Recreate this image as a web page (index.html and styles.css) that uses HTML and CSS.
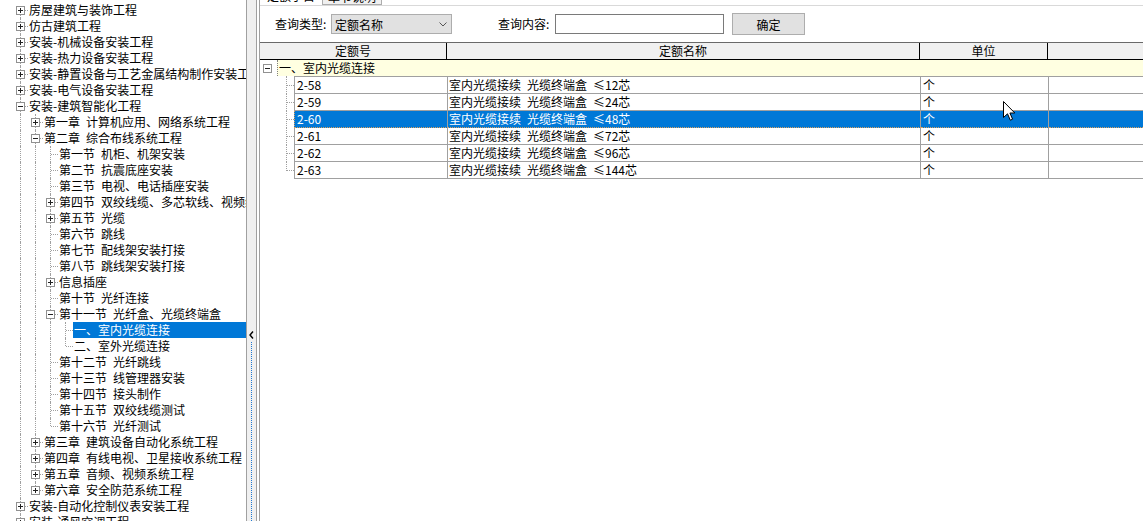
FILE: index.html
```html
<!DOCTYPE html>
<html lang="zh-CN">
<head>
    <meta charset="UTF-8">
    <title>定额查询</title>
    <link rel="stylesheet" href="styles.css">
</head>
<body>
<div class="app">
    <div class="tree">
        <div class="node"><span class="tg first"><i class="box plus"></i></span><span class="lb">房屋建筑与装饰工程</span></div>
        <div class="node"><span class="tg"><i class="box plus"></i></span><span class="lb">仿古建筑工程</span></div>
        <div class="node"><span class="tg"><i class="box plus"></i></span><span class="lb">安装-机械设备安装工程</span></div>
        <div class="node"><span class="tg"><i class="box plus"></i></span><span class="lb">安装-热力设备安装工程</span></div>
        <div class="node"><span class="tg"><i class="box plus"></i></span><span class="lb">安装-静置设备与工艺金属结构制作安装工程</span></div>
        <div class="node"><span class="tg"><i class="box plus"></i></span><span class="lb">安装-电气设备安装工程</span></div>
        <div class="node"><span class="tg"><i class="box minus"></i></span><span class="lb">安装-建筑智能化工程</span></div>
        <div class="node"><span class="g ln"></span><span class="tg"><i class="box plus"></i></span><span class="lb">第一章&ensp;计算机应用、网络系统工程</span></div>
        <div class="node"><span class="g ln"></span><span class="tg"><i class="box minus"></i></span><span class="lb">第二章&ensp;综合布线系统工程</span></div>
        <div class="node"><span class="g ln"></span><span class="g ln"></span><span class="tg"></span><span class="lb">第一节&ensp;机柜、机架安装</span></div>
        <div class="node"><span class="g ln"></span><span class="g ln"></span><span class="tg"></span><span class="lb">第二节&ensp;抗震底座安装</span></div>
        <div class="node"><span class="g ln"></span><span class="g ln"></span><span class="tg"></span><span class="lb">第三节&ensp;电视、电话插座安装</span></div>
        <div class="node"><span class="g ln"></span><span class="g ln"></span><span class="tg"><i class="box plus"></i></span><span class="lb">第四节&ensp;双绞线缆、多芯软线、视频线缆</span></div>
        <div class="node"><span class="g ln"></span><span class="g ln"></span><span class="tg"><i class="box plus"></i></span><span class="lb">第五节&ensp;光缆</span></div>
        <div class="node"><span class="g ln"></span><span class="g ln"></span><span class="tg"></span><span class="lb">第六节&ensp;跳线</span></div>
        <div class="node"><span class="g ln"></span><span class="g ln"></span><span class="tg"></span><span class="lb">第七节&ensp;配线架安装打接</span></div>
        <div class="node"><span class="g ln"></span><span class="g ln"></span><span class="tg"></span><span class="lb">第八节&ensp;跳线架安装打接</span></div>
        <div class="node"><span class="g ln"></span><span class="g ln"></span><span class="tg"><i class="box plus"></i></span><span class="lb">信息插座</span></div>
        <div class="node"><span class="g ln"></span><span class="g ln"></span><span class="tg"></span><span class="lb">第十节&ensp;光纤连接</span></div>
        <div class="node"><span class="g ln"></span><span class="g ln"></span><span class="tg"><i class="box minus"></i></span><span class="lb">第十一节&ensp;光纤盒、光缆终端盒</span></div>
        <div class="node"><span class="g ln"></span><span class="g ln"></span><span class="g ln"></span><span class="tg"></span><span class="lb sel">一、室内光缆连接</span></div>
        <div class="node"><span class="g ln"></span><span class="g ln"></span><span class="g ln"></span><span class="tg last"></span><span class="lb">二、室外光缆连接</span></div>
        <div class="node"><span class="g ln"></span><span class="g ln"></span><span class="tg"></span><span class="lb">第十二节&ensp;光纤跳线</span></div>
        <div class="node"><span class="g ln"></span><span class="g ln"></span><span class="tg"></span><span class="lb">第十三节&ensp;线管理器安装</span></div>
        <div class="node"><span class="g ln"></span><span class="g ln"></span><span class="tg"></span><span class="lb">第十四节&ensp;接头制作</span></div>
        <div class="node"><span class="g ln"></span><span class="g ln"></span><span class="tg"></span><span class="lb">第十五节&ensp;双绞线缆测试</span></div>
        <div class="node"><span class="g ln"></span><span class="g ln"></span><span class="tg last"></span><span class="lb">第十六节&ensp;光纤测试</span></div>
        <div class="node"><span class="g ln"></span><span class="tg"><i class="box plus"></i></span><span class="lb">第三章&ensp;建筑设备自动化系统工程</span></div>
        <div class="node"><span class="g ln"></span><span class="tg"><i class="box plus"></i></span><span class="lb">第四章&ensp;有线电视、卫星接收系统工程</span></div>
        <div class="node"><span class="g ln"></span><span class="tg"><i class="box plus"></i></span><span class="lb">第五章&ensp;音频、视频系统工程</span></div>
        <div class="node"><span class="g ln"></span><span class="tg last"><i class="box plus"></i></span><span class="lb">第六章&ensp;安全防范系统工程</span></div>
        <div class="node"><span class="tg"><i class="box plus"></i></span><span class="lb">安装-自动化控制仪表安装工程</span></div>
        <div class="node"><span class="tg"><i class="box plus"></i></span><span class="lb">安装-通风空调工程</span></div>
    </div>

    <div class="splitter">
        <svg class="arrow" width="5" height="8" viewBox="0 0 5 8"><path d="M4 0.5 L1 4 L4 7.5" fill="none" stroke="#000" stroke-width="1.4"/></svg>
        <div class="grip"></div>
    </div>

    <div class="main">
        <div class="tabs">
            <span class="tab">定额子目</span>
            <span class="tab on">章节说明</span>
        </div>

        <div class="query">
            <label class="ql">查询类型:</label>
            <div class="select">
                <span>定额名称</span>
                <svg width="8" height="5" viewBox="0 0 8 5"><path d="M0.5 0.5 L4 4 L7.5 0.5" fill="none" stroke="#555" stroke-width="1"/></svg>
            </div>
            <label class="ql ql2">查询内容:</label>
            <input class="qinput" type="text">
            <button class="btn" type="button">确定</button>
        </div>

        <div class="grid">
            <div class="ghead">
                <div class="hc c-head-code">定额号</div>
                <div class="hc c-name">定额名称</div>
                <div class="hc c-unit">单位</div>
                <div class="hc c-rest"></div>
            </div>
            <div class="grp">
                <span class="gtg"><i class="box minus"></i></span>
                <span class="gtx">一、室内光缆连接</span>
            </div>
            <div class="drow first">
                <span class="dtg"></span>
                <span class="cell c-code">2-58</span>
                <span class="cell c-name">室内光缆接续&ensp;光缆终端盒&ensp;≤12芯</span>
                <span class="cell c-unit">个</span>
                <span class="cell c-rest"></span>
            </div>
            <div class="drow">
                <span class="dtg"></span>
                <span class="cell c-code">2-59</span>
                <span class="cell c-name">室内光缆接续&ensp;光缆终端盒&ensp;≤24芯</span>
                <span class="cell c-unit">个</span>
                <span class="cell c-rest"></span>
            </div>
            <div class="drow sel">
                <span class="dtg"></span>
                <span class="cell c-code">2-60</span>
                <span class="cell c-name">室内光缆接续&ensp;光缆终端盒&ensp;≤48芯</span>
                <span class="cell c-unit">个</span>
                <span class="cell c-rest"></span>
            </div>
            <div class="drow">
                <span class="dtg"></span>
                <span class="cell c-code">2-61</span>
                <span class="cell c-name">室内光缆接续&ensp;光缆终端盒&ensp;≤72芯</span>
                <span class="cell c-unit">个</span>
                <span class="cell c-rest"></span>
            </div>
            <div class="drow">
                <span class="dtg"></span>
                <span class="cell c-code">2-62</span>
                <span class="cell c-name">室内光缆接续&ensp;光缆终端盒&ensp;≤96芯</span>
                <span class="cell c-unit">个</span>
                <span class="cell c-rest"></span>
            </div>
            <div class="drow last">
                <span class="dtg"></span>
                <span class="cell c-code">2-63</span>
                <span class="cell c-name">室内光缆接续&ensp;光缆终端盒&ensp;≤144芯</span>
                <span class="cell c-unit">个</span>
                <span class="cell c-rest"></span>
            </div>
        </div>
    </div>

    <!-- mouse pointer over the grid -->
    <svg class="cursor" width="13" height="21" viewBox="0 0 13 21">
        <path d="M0.5 0.5 L0.5 16.5 L4.5 12.8 L7.3 19.2 L9.6 18.2 L6.9 12 L11.8 12 Z" fill="#fff" stroke="#000" stroke-width="1"/>
    </svg>
</div>
</body>
</html>
```

FILE: styles.css
```css
* {
    box-sizing: border-box;
}
html,
body {
    margin: 0;
    height: 100%;
}
body {
    font-family: "Noto Sans CJK SC", sans-serif;
    font-size: 12px;
    color: #000;
    background: #fff;
    overflow: hidden;
}
.app {
    position: relative;
    display: flex;
    width: 1143px;
    height: 521px;
}

/* left tree */
.tree {
    width: 247px;
    flex: none;
    padding-top: 2px;
    overflow: hidden;
    border-right: 1px solid #a0a0a0;
}
.node {
    display: flex;
    height: 16px;
    line-height: 16px;
    padding-left: 13px;
    white-space: nowrap;
}
.g,
.tg {
    position: relative;
    width: 15px;
    flex: none;
}
.tg {
    display: flex;
    align-items: center;
    justify-content: center;
}
.g.ln::before,
.tg::before {
    content: "";
    position: absolute;
    left: 7px;
    top: 0;
    bottom: 0;
    border-left: 1px dotted #a0a0a0;
}
.tg.first::before {
    top: 8px;
}
.tg.last::before {
    bottom: 8px;
}
.tg::after {
    content: "";
    position: absolute;
    left: 8px;
    right: 0;
    top: 8px;
    border-top: 1px dotted #a0a0a0;
}
.box {
    position: relative;
    z-index: 1;
    width: 9px;
    height: 9px;
    border: 1px solid #919191;
    background: #fff;
}
.box.minus {
    background: linear-gradient(#222, #222) center / 5px 1px no-repeat, #fff;
}
.box.plus {
    background: linear-gradient(#222, #222) center / 5px 1px no-repeat,
        linear-gradient(#222, #222) center / 1px 5px no-repeat, #fff;
}
.lb {
    flex: 1;
    padding-left: 1px;
    overflow: hidden;
}
.lb.sel {
    background: #0078d7;
    color: #fff;
}

/* splitter */
.splitter {
    width: 10px;
    flex: none;
    display: flex;
    flex-direction: column;
    background: #f0f0f0;
    border-right: 1px solid #a0a0a0;
}
.arrow {
    margin: 331px 0 0 2px;
}
.grip {
    flex: 1;
    margin: 3px 0 0 4px;
    border-left: 1px dotted #1e78d2;
}

/* right side */
.main {
    flex: 1;
    display: flex;
    flex-direction: column;
    margin-left: 2px;
    border-left: 1px solid #a0a0a0;
    min-width: 0;
}
.tabs {
    display: flex;
    height: 6px;
    padding-left: 2px;
    border-bottom: 1px solid #d9d9d9;
    overflow: hidden;
}
.tab {
    line-height: 14px;
    margin-top: -11px;
    padding: 0 5px;
}
.tab.on {
    margin-left: 2px;
    background: #f0f0f0;
    border: 1px solid #adadad;
}
.query {
    display: flex;
    align-items: flex-start;
    height: 36px;
    padding: 8px 0 0 15px;
}
.ql {
    width: 56px;
    line-height: 20px;
}
.ql2 {
    width: 57px;
    margin-left: 46px;
}
.select {
    width: 121px;
    height: 20px;
    display: flex;
    align-items: center;
    justify-content: space-between;
    padding: 0 4px 0 3px;
    background: #e1e1e1;
    border: 1px solid #adadad;
}
.qinput {
    width: 169px;
    height: 20px;
    margin: 0;
    border: 1px solid #7a7a7a;
    padding: 0 2px;
    font: inherit;
}
.btn {
    width: 73px;
    height: 22px;
    margin: -1px 0 0 8px;
    padding: 0;
    background: #e1e1e1;
    border: 1px solid #adadad;
    font: inherit;
    color: #000;
}

/* grid */
.grid {
    flex: 1;
    line-height: 16px;
    white-space: nowrap;
}
.ghead {
    display: flex;
    background: #f0f0f0;
    border-top: 1px solid #696969;
    border-bottom: 1px solid #000;
}
.hc {
    height: 16px;
    text-align: center;
    border-right: 1px solid #000;
}
.c-head-code {
    width: 187px;
}
.c-name {
    width: 473px;
}
.c-unit {
    width: 128px;
}
.c-rest {
    flex: 1;
    border-right: none;
}
.grp {
    display: flex;
    height: 16px;
}
.gtg {
    width: 17px;
    display: flex;
    align-items: center;
    justify-content: center;
    padding-right: 2px;
}
.gtx {
    flex: 1;
    background: #ffffe1;
    border-left: 1px dotted #808080;
    padding-left: 1px;
}
.drow {
    display: flex;
}
.dtg {
    position: relative;
    width: 34px;
    flex: none;
}
.dtg::before {
    content: "";
    position: absolute;
    left: 26px;
    top: 0;
    bottom: 0;
    border-left: 1px dotted #a0a0a0;
}
.drow.last .dtg::before {
    bottom: 8px;
}
.dtg::after {
    content: "";
    position: absolute;
    left: 27px;
    right: 0;
    bottom: 8px;
    border-top: 1px dotted #a0a0a0;
}
.cell {
    height: 17px;
    padding-left: 2px;
    border-right: 1px solid #a0a0a0;
    border-bottom: 1px solid #a0a0a0;
}
.drow.first .cell {
    height: 18px;
    border-top: 1px solid #a0a0a0;
}
.cell.c-code {
    width: 154px;
    border-left: 1px solid #a0a0a0;
}
.cell.c-name {
    padding-left: 1px;
}
.cell.c-rest {
    border-right: none;
}
.drow.sel .cell {
    background: #0078d7;
    color: #fff;
    border-bottom: 1px dotted #d8a060;
}
.drow.sel .cell.c-code {
    border-left: 1px dotted #d8a060;
}

.cursor {
    position: absolute;
    left: 1003px;
    top: 101px;
}
```
